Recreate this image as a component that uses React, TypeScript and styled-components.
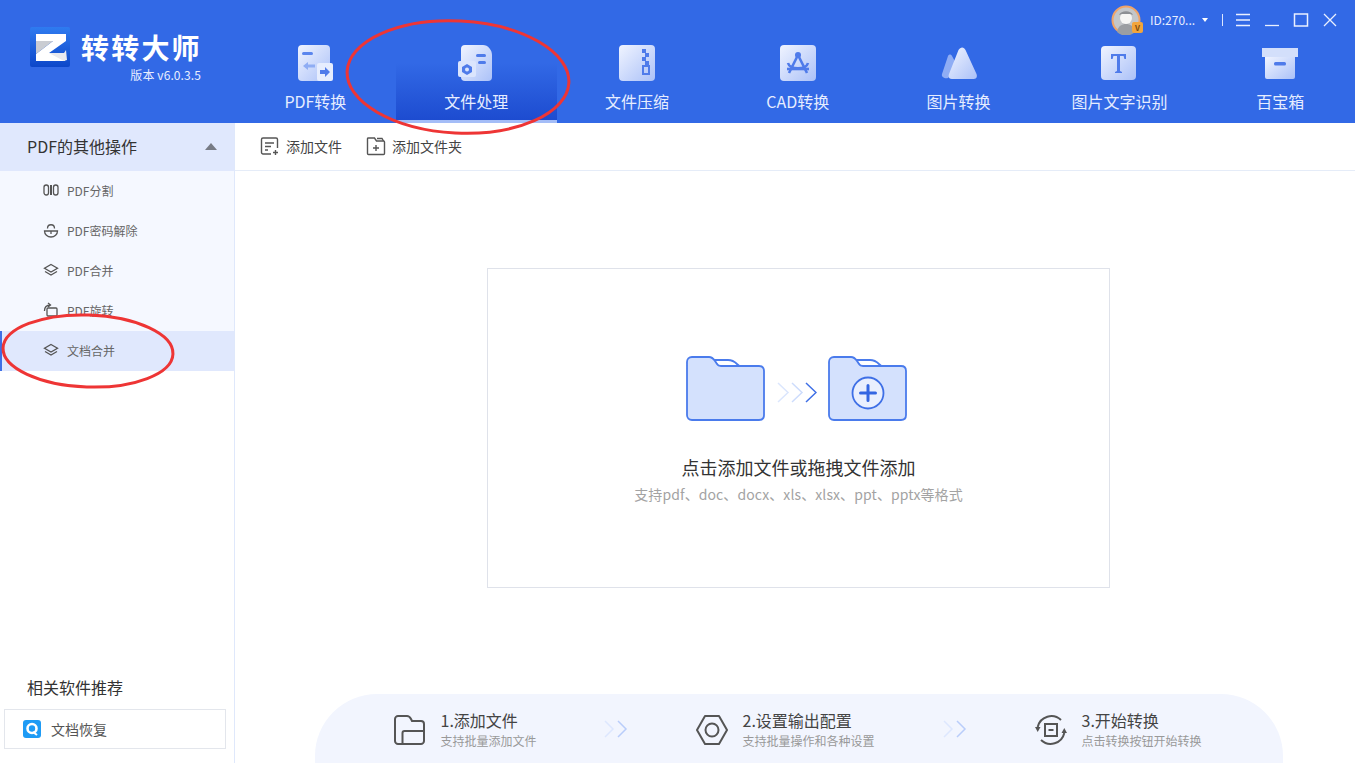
import { FC, ReactNode } from 'react';
import styled, { createGlobalStyle } from 'styled-components';

const GlobalStyle = createGlobalStyle`
  html, body {
    margin: 0;
    padding: 0;
    background: #ffffff;
  }
  body {
    font-family: "Noto Sans CJK SC", "Noto Sans", sans-serif;
  }
  * {
    box-sizing: border-box;
  }
`;

const navTabs = [
  { label: 'PDF转换', icon: 'pdf' },
  { label: '文件处理', icon: 'file', active: true },
  { label: '文件压缩', icon: 'zip' },
  { label: 'CAD转换', icon: 'cad' },
  { label: '图片转换', icon: 'image' },
  { label: '图片文字识别', icon: 'ocr' },
  { label: '百宝箱', icon: 'box' },
];

const sideItems = [
  { label: 'PDF分割', icon: 'split' },
  { label: 'PDF密码解除', icon: 'unlock' },
  { label: 'PDF合并', icon: 'layers' },
  { label: 'PDF旋转', icon: 'rotate' },
  { label: '文档合并', icon: 'layers', active: true },
];

const NavIcon: FC<{ name: string }> = ({ name }) => {
  const fill = `url(#nav-${name})`;
  const shapes: Record<string, ReactNode> = {
    pdf: (
      <>
        <rect x="1" y="0" width="32" height="36" rx="4" fill={fill} />
        <rect x="5" y="7" width="11" height="3" rx="1.5" fill="#5b86ee" />
        <path d="M11 17l-5 4 5 4v-2.6h7v-2.8h-7z" fill="#8fadf4" />
        <rect x="20" y="18" width="16" height="18" rx="2" fill="#e6edfe" />
        <path d="M28 22l5 5-5 5v-3h-5v-4h5z" fill="#4f7bea" />
      </>
    ),
    file: (
      <>
        <path d="M7 0h18c5 0 9 5 9 10v22a4 4 0 0 1-4 4H7a4 4 0 0 1-4-4V4a4 4 0 0 1 4-4z" fill={fill} />
        <rect x="18" y="9" width="10" height="3" rx="1.5" fill="#4f7bea" />
        <rect x="20" y="16" width="8" height="3" rx="1.5" fill="#4f7bea" />
        <rect x="0" y="16" width="18" height="16" rx="2" fill="#dbe5fd" />
        <path d="M9 19l5 2.9v5.2L9 30l-5-2.9v-5.2z" fill="#4f7bea" />
        <circle cx="9" cy="24.500" r="2" fill="#dbe5fd" />
      </>
    ),
    zip: (
      <>
        <rect x="0" y="0" width="36" height="36" rx="4" fill={fill} />
        <path d="M23 4h4v4h-4zM26 8h4v4h-4zM23 12h4v4h-4zM26 16h4v4h-4z" fill="#4f7bea" />
        <path d="M24 21h6v8h-6z" fill="none" stroke="#4f7bea" strokeWidth="2" />
      </>
    ),
    cad: (
      <>
        <rect x="0" y="0" width="36" height="36" rx="4" fill={fill} />
        <circle cx="18" cy="10" r="3" fill="#4f7bea" />
        <path d="M17 12L9 28M19 12l8 16M8 18c2 7 18 7 20 0" fill="none" stroke="#4f7bea" strokeWidth="2.600" />
        <path d="M7 24h22" stroke="#4f7bea" strokeWidth="2.600" />
      </>
    ),
    image: (
      <>
        <path d="M7 11c1-2 3-2 4 0l6 11-10 11c-3 1-7-1-6-4z" fill="#8fadf4" />
        <path d="M17.500 5c2-3.500 5.500-3.500 7 0l11 24c1 3 0 5-3 5H11c-3 0-4-2-3-5z" fill={fill} />
      </>
    ),
    ocr: (
      <>
        <rect x="0" y="1" width="35" height="34" rx="4" fill={fill} />
        <path d="M10 9h15v5h-1.600l-.8-3H19v15l2 1v1h-7v-1l2-1V11h-3.600l-.8 3H10z" fill="#4f7bea" />
      </>
    ),
    box: (
      <>
        <rect x="0" y="3" width="36" height="9" fill="#d3dffb" />
        <path d="M3 12h30v20a2 2 0 0 1-2 2H5a2 2 0 0 1-2-2z" fill={fill} />
        <rect x="12" y="17" width="12" height="3.500" rx="1.500" fill="#4f7bea" />
      </>
    ),
  };
  return (
    <svg width="36" height="36" viewBox="0 0 36 36">
      <defs>
        <linearGradient id={`nav-${name}`} x1="0" y1="0" x2="1" y2="1">
          <stop offset="0" stopColor="#f0f4ff" />
          <stop offset="1" stopColor="#abc1f8" />
        </linearGradient>
      </defs>
      {shapes[name]}
    </svg>
  );
};

const SideIcon: FC<{ name: string }> = ({ name }) => {
  const shapes: Record<string, ReactNode> = {
    split: (
      <>
        <rect x="1" y="3" width="4.500" height="10" rx="2.200" />
        <rect x="10.500" y="3" width="4.500" height="10" rx="2.200" />
        <path d="M8 3v10" strokeWidth="2" />
      </>
    ),
    unlock: (
      <>
        <path d="M1.500 9h13a6.500 6 0 0 1-13 0z" />
        <path d="M4.500 6.500c0-5 7-5 7 0" />
        <path d="M8 9v3" />
      </>
    ),
    layers: (
      <>
        <path d="M8 2.500l6.500 3.700L8 10 1.500 6.200z" />
        <path d="M2 9.500L8 13l6-3.500" />
      </>
    ),
    rotate: (
      <>
        <rect x="4" y="6" width="10" height="8" rx="1" />
        <path d="M1.500 9c0-4 2.500-6 6-6M5 1l2.500 2L5 5" />
      </>
    ),
  };
  return (
    <svg width="16" height="16" viewBox="0 0 16 16" fill="none" stroke="#555" strokeWidth="1.300">
      {shapes[name]}
    </svg>
  );
};

const FolderArt: FC<{ plus?: boolean }> = ({ plus }) => (
  <svg width="80" height="65" viewBox="0 0 80 65">
    <path d="M28 4h14c4 0 6 1 9 4l6 5H34z" fill="#fff" stroke="#4a7bec" strokeWidth="1.800" />
    <path
      d="M6 1h17c3 0 4 1 6 4l2 3c1 2 2 2 4 2h38c3 0 5 2 5 5v44c0 3-2 5-5 5H6c-3 0-5-2-5-5V6c0-3 2-5 5-5z"
      fill="#d4e1fd"
      stroke="#4a7bec"
      strokeWidth="1.800"
    />
    {plus && (
      <>
        <circle cx="40" cy="37" r="15.500" fill="#e9effe" stroke="#3e6fe6" strokeWidth="1.800" />
        <path d="M40 29.500v15M32.500 37h15" stroke="#3466e2" strokeWidth="3" strokeLinecap="round" />
      </>
    )}
  </svg>
);

const Chevrons: FC<{ size: 'small' | 'large' }> = ({ size }) =>
  size === 'large' ? (
    <LargeChevrons width="40" height="21" viewBox="0 0 40 21" fill="none" strokeWidth="1.500">
      <path d="M1 1l10 9.500L1 20" stroke="#dbe6fd" />
      <path d="M15 1l10 9.500L15 20" stroke="#cddcfc" />
      <path d="M29 1l10 9.500L29 20" stroke="#3e6fe6" />
    </LargeChevrons>
  ) : (
    <svg width="24" height="18" viewBox="0 0 24 18" fill="none" strokeWidth="1.500">
      <path d="M1 1l8 8-8 8" stroke="#dde7fe" />
      <path d="M14 1l8 8-8 8" stroke="#b9cdfa" />
    </svg>
  );

const StepIcon: FC<{ name: string }> = ({ name }) => {
  const shapes: Record<string, ReactNode> = {
    add: (
      <>
        <path d="M4 2h9c2 0 3 1 4 3l1 2h9c1.500 0 3 1 3 3v17c0 1.500-1.500 3-3 3H4c-1.500 0-3-1.500-3-3V5c0-1.500 1.500-3 3-3z" />
        <path d="M8.500 30V19c0-1 .5-2 2-2H31" />
      </>
    ),
    config: (
      <>
        <path d="M9 2h14l8 14-8 14H9L1 16z" strokeLinejoin="round" />
        <circle cx="16" cy="16" r="6.500" />
      </>
    ),
    start: (
      <>
        <path d="M26 6A14 14 0 0 0 2.700 13M6 26A14 14 0 0 0 29.300 19" />
        <path d="M0 13h5.500L2.700 18zM32 19h-5.500l2.800-5z" fill="#555" stroke="none" />
        <rect x="10" y="10" width="12" height="12" />
        <path d="M13.500 16h5" />
      </>
    ),
  };
  return (
    <svg width="32" height="32" viewBox="0 0 32 32" fill="none" stroke="#555" strokeWidth="2">
      {shapes[name]}
    </svg>
  );
};

const App: FC = () => (
  <>
    <GlobalStyle />
    <Page>
      <Header>
        <Brand>
          <LogoRow>
            <svg width="40" height="40" viewBox="0 0 40 40">
              <defs>
                <linearGradient id="logo-bg" x1="0" y1="0" x2="0" y2="1">
                  <stop offset="0" stopColor="#2f7bf0" />
                  <stop offset="1" stopColor="#0d47c9" />
                </linearGradient>
              </defs>
              <rect width="40" height="40" rx="2" fill="url(#logo-bg)" />
              <path d="M6 7h30v7L19 26h16v8H6v-7l17-13H6z" fill="#fff" />
              <path d="M6 14h17L6 27z" fill="#c9ccd2" />
              <path d="M19 26h15l2-3 1 10-3 1z" fill="#e8e9ee" />
            </svg>
            <BrandName>转转大师</BrandName>
          </LogoRow>
          <Version>版本 v6.0.3.5</Version>
        </Brand>
        <HeaderRight>
          <TitleBar>
            <Avatar>
              <svg width="30" height="30" viewBox="0 0 30 30">
                <circle cx="15" cy="15" r="13.500" fill="#c3c6c9" stroke="#f0a468" strokeWidth="2" />
                <path d="M6 27c1-6 5-8 9-8s8 2 9 8a13 13 0 0 1-18 0z" fill="#9b9ea2" />
                <circle cx="15" cy="13" r="6" fill="#f6f6f4" />
                <path d="M8 10c2-5 12-5 14 0l-3-1h-8z" fill="#8d9094" />
              </svg>
              <AvatarBadge>V</AvatarBadge>
            </Avatar>
            <UserId>ID:270...</UserId>
            <Caret />
            <TitleDivider />
            <WindowButton>
              <svg width="16" height="14" viewBox="0 0 16 14" stroke="#eaf0ff" strokeWidth="1.300">
                <path d="M1 1.500h14M1 7h14M1 12.500h14" />
              </svg>
            </WindowButton>
            <WindowButton>
              <svg width="16" height="14" viewBox="0 0 16 14" stroke="#eaf0ff" strokeWidth="1.300">
                <path d="M1 12.500h14" />
              </svg>
            </WindowButton>
            <WindowButton>
              <svg width="16" height="14" viewBox="0 0 16 14" fill="none" stroke="#eaf0ff" strokeWidth="1.500">
                <rect x="1.500" y="1" width="13" height="12" />
              </svg>
            </WindowButton>
            <WindowButton>
              <svg width="16" height="14" viewBox="0 0 16 14" stroke="#eaf0ff" strokeWidth="1.300">
                <path d="M2 1l12 12M14 1L2 13" />
              </svg>
            </WindowButton>
          </TitleBar>
          <Tabs>
            {navTabs.map(tab => (
              <Tab key={tab.label} active={tab.active}>
                <NavIcon name={tab.icon} />
                <TabLabel>{tab.label}</TabLabel>
              </Tab>
            ))}
          </Tabs>
        </HeaderRight>
      </Header>

      <Body>
        <Sidebar>
          <GroupHeader>
            PDF的其他操作
            <GroupArrow />
          </GroupHeader>
          <SideList>
            {sideItems.map(item => (
              <SideItem key={item.label} active={item.active}>
                <SideIcon name={item.icon} />
                {item.label}
              </SideItem>
            ))}
          </SideList>
          <Recommend>
            <RecommendTitle>相关软件推荐</RecommendTitle>
            <RecommendCard>
              <svg width="18" height="18" viewBox="0 0 18 18">
                <rect width="18" height="18" rx="3" fill="#1e9bf5" />
                <circle cx="9" cy="8.500" r="4.500" fill="none" stroke="#fff" strokeWidth="2.600" />
                <path d="M10 12l4 3" stroke="#fff" strokeWidth="2" />
              </svg>
              文档恢复
            </RecommendCard>
          </Recommend>
        </Sidebar>

        <Main>
          <Toolbar>
            <ToolButton>
              <svg width="20" height="20" viewBox="0 0 20 20" fill="none" stroke="#555" strokeWidth="1.400">
                <path d="M11 18H3a1.500 1.500 0 0 1-1.500-1.500v-13A1.500 1.500 0 0 1 3 2h13a1.500 1.500 0 0 1 1.500 1.500V12" />
                <path d="M5 7h9M5 10.500h6M5 14h3M15.500 14v5M13 16.500h5" />
              </svg>
              添加文件
            </ToolButton>
            <ToolButton>
              <svg width="20" height="20" viewBox="0 0 20 20" fill="none" stroke="#555" strokeWidth="1.400">
                <path d="M2.500 2h6l2 3h7c.6 0 1 .4 1 1v11.500c0 .6-.4 1-1 1h-15c-.6 0-1-.4-1-1v-15c0-.3.4-.5 1-.5z" />
                <path d="M10 9v6M7 12h6M11 2.500h5l1.500 2.500" />
              </svg>
              添加文件夹
            </ToolButton>
          </Toolbar>
          <Content>
            <DropZone>
              <DropArt>
                <FolderArt />
                <Chevrons size="large" />
                <FolderArt plus />
              </DropArt>
              <DropTitle>点击添加文件或拖拽文件添加</DropTitle>
              <DropHint>支持pdf、doc、docx、xls、xlsx、ppt、pptx等格式</DropHint>
            </DropZone>
            <StepsPanel>
              <Step width={210}>
                <StepIcon name="add" />
                <StepText>
                  <StepTitle>1.添加文件</StepTitle>
                  <StepHint>支持批量添加文件</StepHint>
                </StepText>
              </Step>
              <ChevronSlot>
                <Chevrons size="small" />
              </ChevronSlot>
              <Step width={247}>
                <StepIcon name="config" />
                <StepText>
                  <StepTitle>2.设置输出配置</StepTitle>
                  <StepHint>支持批量操作和各种设置</StepHint>
                </StepText>
              </Step>
              <ChevronSlot>
                <Chevrons size="small" />
              </ChevronSlot>
              <Step width={220}>
                <StepIcon name="start" />
                <StepText>
                  <StepTitle>3.开始转换</StepTitle>
                  <StepHint>点击转换按钮开始转换</StepHint>
                </StepText>
              </Step>
            </StepsPanel>
          </Content>
        </Main>
      </Body>

      <Annotations viewBox="0 0 1355 763">
        <ellipse cx="458" cy="77" rx="111" ry="56" transform="rotate(3 458 77)" />
        <ellipse cx="88" cy="351" rx="85" ry="36" transform="rotate(2 88 351)" />
      </Annotations>
    </Page>
  </>
);

const Page = styled.div`
  position: relative;
  width: 1355px;
  height: 763px;
  display: flex;
  flex-direction: column;
  overflow: hidden;
  background: #ffffff;
`;

const Header = styled.header`
  display: flex;
  height: 123px;
  flex-shrink: 0;
  background: #3269e6;
`;

const Brand = styled.div`
  width: 235px;
  flex-shrink: 0;
  padding: 27px 34px 0 30px;
  display: flex;
  flex-direction: column;
`;

const LogoRow = styled.div`
  display: flex;
  align-items: center;
  gap: 11px;
  height: 40px;

  svg {
    flex-shrink: 0;
  }
`;

const BrandName = styled.div`
  font-size: 28px;
  font-weight: 700;
  letter-spacing: 2.2px;
  color: #ffffff;
  white-space: nowrap;
  line-height: 40px;
`;

const Version = styled.div`
  font-size: 12px;
  line-height: 16px;
  letter-spacing: 0.1px;
  color: #e8eeff;
  text-align: right;
  white-space: nowrap;
`;

const HeaderRight = styled.div`
  flex: 1;
  min-width: 0;
  display: flex;
  flex-direction: column;
`;

const TitleBar = styled.div`
  height: 38px;
  padding: 1px 11px 0 0;
  display: flex;
  align-items: center;
  justify-content: flex-end;
`;

const Avatar = styled.div`
  position: relative;
  width: 30px;
  height: 30px;
  margin-right: 9px;
`;

const AvatarBadge = styled.span`
  position: absolute;
  right: -2px;
  bottom: 2px;
  width: 11px;
  height: 11px;
  border-radius: 2px;
  background: #f2a53c;
  color: #7a4a10;
  font-size: 8px;
  font-weight: 700;
  line-height: 11px;
  text-align: center;
`;

const UserId = styled.span`
  width: 49px;
  font-size: 12px;
  color: #e8eeff;
  white-space: nowrap;
`;

const Caret = styled.span`
  width: 0;
  height: 0;
  margin: 0 0 0 3px;
  border-left: 3.5px solid transparent;
  border-right: 3.5px solid transparent;
  border-top: 4px solid #ffffff;
`;

const TitleDivider = styled.span`
  width: 1px;
  height: 12px;
  margin: 0 5px 0 14px;
  background: #dce6ff;
`;

const WindowButton = styled.span`
  width: 29px;
  height: 16px;
  display: flex;
  align-items: center;
  justify-content: center;
`;

const Tabs = styled.nav`
  flex: 1;
  display: flex;
`;

const Tab = styled.div<{ active?: boolean }>`
  flex: 0 0 160.8px;
  padding-top: 7px;
  display: flex;
  flex-direction: column;
  align-items: center;
  border-bottom: 3px solid ${props => (props.active ? '#a4bdf7' : 'transparent')};
  background: ${props =>
    props.active ? 'linear-gradient(180deg, rgba(29, 76, 208, 0) 30%, #1d4cd0 100%)' : 'none'};
`;

const TabLabel = styled.span`
  margin-top: 8px;
  font-size: 16px;
  line-height: 24px;
  color: #e6edff;
  white-space: nowrap;
`;

const Body = styled.div`
  flex: 1;
  min-height: 0;
  display: flex;
`;

const Sidebar = styled.aside`
  width: 235px;
  flex-shrink: 0;
  display: flex;
  flex-direction: column;
  border-right: 1px solid #dfe8fb;
`;

const GroupHeader = styled.div`
  height: 48px;
  flex-shrink: 0;
  padding: 0 17px 2px 27px;
  display: flex;
  align-items: center;
  justify-content: space-between;
  background: #e0e8fd;
  font-size: 16px;
  color: #333333;
`;

const GroupArrow = styled.span`
  width: 0;
  height: 0;
  border-left: 6px solid transparent;
  border-right: 6px solid transparent;
  border-bottom: 7px solid #777b85;
`;

const SideList = styled.div`
  display: flex;
  flex-direction: column;
  background: #f5f8ff;
`;

const SideItem = styled.div<{ active?: boolean }>`
  height: 40px;
  padding: 0 0 2px ${props => (props.active ? '41px' : '43px')};
  display: flex;
  align-items: center;
  gap: 8px;
  border-left: ${props => (props.active ? '2px solid #3e6fe6' : 'none')};
  background: ${props => (props.active ? '#e0e8fd' : 'transparent')};
  font-size: 12px;
  color: #666666;
`;

const Recommend = styled.div`
  margin-top: auto;
  padding: 0 8px 14px 4px;
`;

const RecommendTitle = styled.div`
  padding-left: 23px;
  font-size: 16px;
  line-height: 24px;
  margin-bottom: 10px;
  color: #333333;
`;

const RecommendCard = styled.div`
  height: 40px;
  padding: 0 0 0 18px;
  display: flex;
  align-items: center;
  gap: 10px;
  border: 1px solid #e3e6ec;
  font-size: 14px;
  color: #555555;
`;

const Main = styled.main`
  flex: 1;
  min-width: 0;
  display: flex;
  flex-direction: column;
`;

const Toolbar = styled.div`
  height: 48px;
  flex-shrink: 0;
  padding: 0 0 2px 25px;
  display: flex;
  align-items: center;
  gap: 24px;
  border-bottom: 1px solid #e5ecf8;
`;

const ToolButton = styled.div`
  display: flex;
  align-items: center;
  gap: 6px;
  font-size: 14px;
  color: #444444;
`;

const Content = styled.div`
  flex: 1;
  min-height: 0;
  padding: 97px 0 0 7px;
  display: flex;
  flex-direction: column;
  align-items: center;
`;

const DropZone = styled.div`
  width: 623px;
  height: 320px;
  flex-shrink: 0;
  padding-top: 87px;
  display: flex;
  flex-direction: column;
  align-items: center;
  border: 1px solid #dfe2ea;
`;

const DropArt = styled.div`
  margin-right: 4px;
  display: flex;
  align-items: center;
  gap: 11px;
`;

const LargeChevrons = styled.svg`
  margin-top: 8px;
`;

const DropTitle = styled.div`
  margin-top: 33px;
  font-size: 18px;
  line-height: 26px;
  color: #333333;
`;

const DropHint = styled.div`
  margin-top: 4px;
  font-size: 14px;
  line-height: 20px;
  letter-spacing: 0.1px;
  color: #a3a3a3;
`;

const StepsPanel = styled.div`
  width: 968px;
  height: 69px;
  flex-shrink: 0;
  margin-top: auto;
  padding: 16px 0 0 79px;
  display: flex;
  align-items: flex-start;
  border-radius: 62px 62px 0 0;
  background: #f2f5fe;
`;

const Step = styled.div<{ width: number }>`
  flex: 0 0 ${props => props.width}px;
  display: flex;
  align-items: center;
  gap: 15px;
`;

const StepText = styled.div`
  display: flex;
  flex-direction: column;
  gap: 2px;
`;

const StepTitle = styled.span`
  font-size: 16px;
  line-height: 20px;
  color: #444444;
  white-space: nowrap;
`;

const StepHint = styled.span`
  font-size: 12px;
  line-height: 17px;
  color: #999999;
  white-space: nowrap;
`;

const ChevronSlot = styled.div`
  flex: 0 0 92px;
  padding-top: 10px;
  display: flex;
`;

const Annotations = styled.svg`
  position: absolute;
  left: 0;
  top: 0;
  width: 1355px;
  height: 763px;
  pointer-events: none;

  ellipse {
    fill: none;
    stroke: #ee3535;
    stroke-width: 3;
  }
`;

export default App;
